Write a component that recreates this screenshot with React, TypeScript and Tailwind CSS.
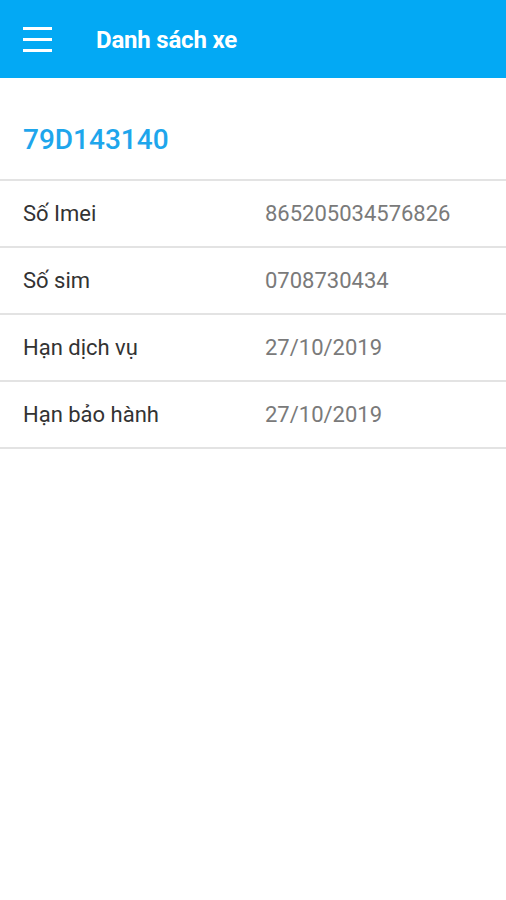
import React from 'react';

const rows = [
  { label: 'Số Imei', value: '865205034576826' },
  { label: 'Số sim', value: '0708730434' },
  { label: 'Hạn dịch vụ', value: '27/10/2019' },
  { label: 'Hạn bảo hành', value: '27/10/2019' },
];

export default function App() {
  return (
    <div className="w-[506px] h-[900px] bg-white font-['Roboto','Liberation_Sans',sans-serif]">
      {/* toolbar */}
      <div className="h-[78px] bg-[#03a9f4] flex items-center">
        <div className="w-[96px] pl-[23px] flex flex-col gap-[8px]">
          <span className="block w-[29px] h-[3px] bg-white" />
          <span className="block w-[29px] h-[3px] bg-white" />
          <span className="block w-[29px] h-[3px] bg-white" />
        </div>
        <h1 className="text-white text-[24px] font-bold tracking-[-0.2px] pt-[2px]">Danh sách xe</h1>
      </div>

      {/* vehicle */}
      <div className="h-[103px] flex items-center px-[23px] pt-[22px] border-b-2 border-[#e3e3e3]">
        <span className="text-[#1ea6ec] text-[28px] font-medium">79D143140</span>
      </div>

      {rows.map(r => (
        <div key={r.label} className="h-[67px] flex items-center px-[23px] border-b-2 border-[#e3e3e3]">
          <span className="w-[242px] text-[22px] text-[#333333]">{r.label}</span>
          <span className="text-[22px] text-[#7a7a7a]">{r.value}</span>
        </div>
      ))}
    </div>
  );
}
